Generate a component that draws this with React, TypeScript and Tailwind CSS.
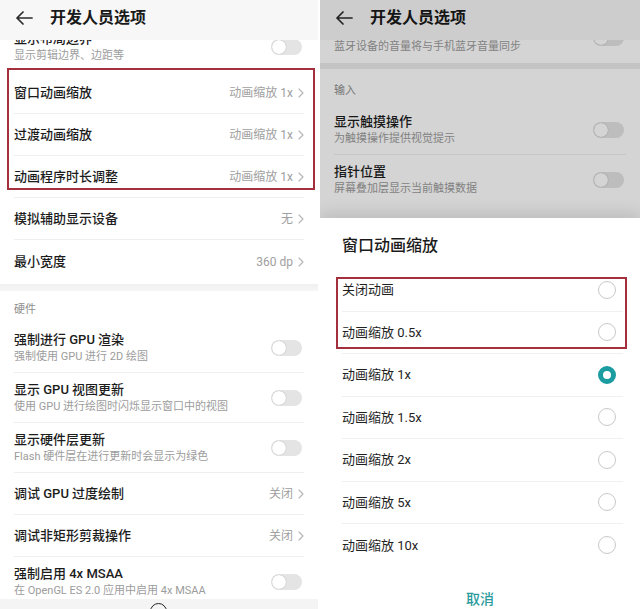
import React from "react";

const BackArrow = () => (
  <svg width="18" height="14" viewBox="0 0 18 14" fill="none">
    <path d="M17 7H2M8 1L2 7l6 6" stroke="#2b2b2b" strokeWidth="1.7" strokeLinecap="round" strokeLinejoin="round" />
  </svg>
);

const Chevron = () => (
  <svg width="6" height="10" viewBox="0 0 6 10" fill="none" className="ml-[5px]">
    <path d="M1 1l4 4-4 4" stroke="#b5b5b5" strokeWidth="1.1" strokeLinecap="round" strokeLinejoin="round" />
  </svg>
);

const Toggle = () => (
  <div className="w-[31px] h-[16px] rounded-full bg-[#e4e4e4] flex items-center px-[1px]">
    <div className="w-[14px] h-[14px] rounded-full bg-white shadow-[0_0_1px_rgba(0,0,0,0.35)]" />
  </div>
);

function Header() {
  return (
    <div className="relative z-10 h-[40px] bg-[#f7f7f7] flex items-center pl-[15px] pb-[4px]">
      <BackArrow />
      <span className="ml-[17px] text-[16px] font-bold text-[#1a1a1a]">开发人员选项</span>
    </div>
  );
}

function SwitchRow({ title, sub, last }: { title?: string; sub: string; last?: boolean }) {
  return (
    <div className={`mx-[14px] h-[50px] flex items-center justify-between ${last ? "" : "border-b border-[#efefef]"}`}>
      <div className="flex flex-col">
        {title ? (
          <span className="text-[13px] leading-[17px] font-medium text-[#1c1c1c]">{title}</span>
        ) : (
          <div className="h-[17px]" />
        )}
        <span className="text-[11px] leading-[17px] text-[#9c9c9c]">{sub}</span>
      </div>
      <div className="mr-[2px]">
        <Toggle />
      </div>
    </div>
  );
}

function ValueRow({ title, value, h = "h-[42px]", last }: { title: string; value: string; h?: string; last?: boolean }) {
  return (
    <div className={`mx-[14px] ${h} flex items-center justify-between ${last ? "" : "border-b border-[#efefef]"}`}>
      <span className="text-[13px] font-medium text-[#1c1c1c]">{title}</span>
      <div className="flex items-center">
        <span className="text-[12px] text-[#a0a0a0]">{value}</span>
        <Chevron />
      </div>
    </div>
  );
}

function LeftPanel() {
  return (
    <div className="relative w-[318px] h-[609px] overflow-hidden bg-white">
      <Header />
      <div className="-mt-[18px]">
        <SwitchRow title="显示布局边界" sub="显示剪辑边界、边距等" last />

        {/* highlighted group */}
        <div className="relative">
          <ValueRow title="窗口动画缩放" value="动画缩放 1x" />
          <ValueRow title="过渡动画缩放" value="动画缩放 1x" />
          <ValueRow title="动画程序时长调整" value="动画缩放 1x" />
          <div className="absolute left-[7px] top-[-4px] w-[308px] h-[122px] border-2 border-[#a3303c] pointer-events-none" />
        </div>

        <ValueRow title="模拟辅助显示设备" value="无" />
        <ValueRow title="最小宽度" value="360 dp" h="h-[44px]" last />

        <div className="h-[7px] bg-gradient-to-b from-[#f0f0f0] to-[#f6f6f6]" />

        <div className="h-[32px] px-[14px] flex items-end pb-[5px]">
          <span className="text-[11px] leading-[17px] text-[#8e8e8e]">硬件</span>
        </div>
        <SwitchRow title="强制进行 GPU 渲染" sub="强制使用 GPU 进行 2D 绘图" />
        <SwitchRow title="显示 GPU 视图更新" sub="使用 GPU 进行绘图时闪烁显示窗口中的视图" />
        <SwitchRow title="显示硬件层更新" sub="Flash 硬件层在进行更新时会显示为绿色" />
        <ValueRow title="调试 GPU 过度绘制" value="关闭" />
        <ValueRow title="调试非矩形剪裁操作" value="关闭" />
        <SwitchRow title="强制启用 4x MSAA" sub="在 OpenGL ES 2.0 应用中启用 4x MSAA" last />
      </div>

      {/* navigation bar */}
      <div className="absolute left-0 right-0 bottom-0 h-[10px] bg-[#f4f4f4]">
        <div className="absolute left-[150px] top-[4px] w-[17px] h-[17px] rounded-full border-[1.5px] border-[#222]" />
      </div>
    </div>
  );
}

const Radio = ({ on }: { on?: boolean }) =>
  on ? (
    <div className="w-[18px] h-[18px] rounded-full border-[5px] border-[#1a9ca0] bg-white" />
  ) : (
    <div className="w-[18px] h-[18px] rounded-full border-[1.5px] border-[#c9c9c9]" />
  );

const options = ["关闭动画", "动画缩放 0.5x", "动画缩放 1x", "动画缩放 1.5x", "动画缩放 2x", "动画缩放 5x", "动画缩放 10x"];

function RightPanel() {
  return (
    <div className="relative w-[320px] h-[609px] overflow-hidden bg-white">
      {/* settings page behind the dialog */}
      <Header />
      <div className="-mt-[27px]">
        <SwitchRow sub="蓝牙设备的音量将与手机蓝牙音量同步" last />
        <div className="h-[6px] bg-[#ececec]" />
        <div className="h-[36px] px-[14px] flex items-end pb-[6px]">
          <span className="text-[11px] leading-[17px] text-[#8e8e8e]">输入</span>
        </div>
        <SwitchRow title="显示触摸操作" sub="为触摸操作提供视觉提示" />
        <SwitchRow title="指针位置" sub="屏幕叠加层显示当前触摸数据" last />
      </div>

      {/* dim */}
      <div className="absolute inset-0 z-20 bg-black/[0.17]" />

      {/* bottom sheet */}
      <div className="absolute z-30 left-0 right-0 bottom-0 h-[391px] bg-white shadow-[0_-6px_14px_rgba(0,0,0,0.1)]">
        <div className="h-[51px] pt-[16px] pl-[22px]">
          <span className="text-[16px] leading-[22px] font-medium text-[#1a1a1a]">窗口动画缩放</span>
        </div>
        <div className="relative">
          {options.map((o, i) => (
            <div
              key={o}
              className={`ml-[22px] mr-[17px] h-[42.5px] pr-[7px] flex items-center justify-between ${
                i < options.length - 1 ? "border-b border-[#f0f0f0]" : ""
              }`}
            >
              <span className="text-[13px] text-[#1f1f1f]">{o}</span>
              <Radio on={i === 2} />
            </div>
          ))}
          <div className="absolute left-[16px] top-[8px] w-[291px] h-[72px] border-2 border-[#a3303c] pointer-events-none" />
        </div>
        <div className="pt-[22px] flex justify-center">
          <span className="text-[14px] leading-[20px] font-medium text-[#2a9a9d]">取消</span>
        </div>
      </div>
    </div>
  );
}

export default function App() {
  return (
    <div className="w-[640px] h-[609px] flex bg-white overflow-hidden font-['Roboto','Noto_Sans_CJK_SC',sans-serif]">
      <LeftPanel />
      <div className="w-[2px] bg-white" />
      <RightPanel />
    </div>
  );
}
